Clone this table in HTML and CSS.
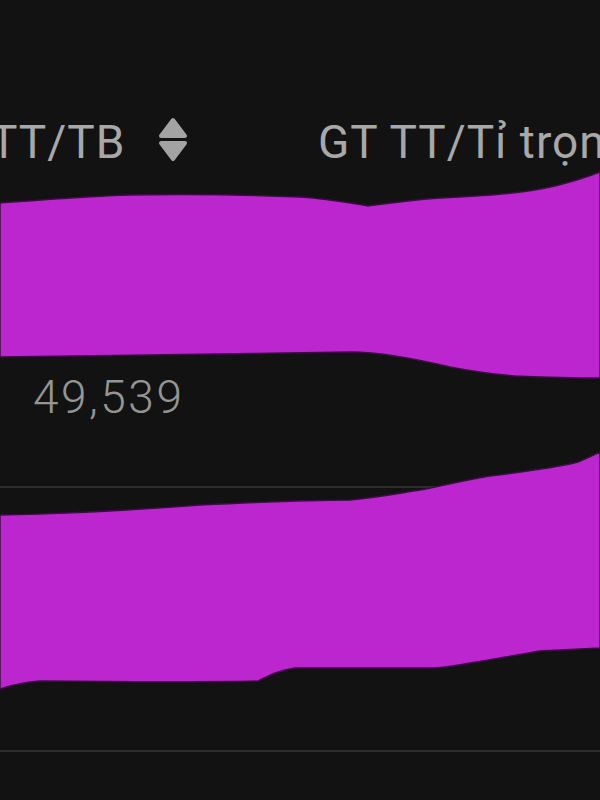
FILE: index.html
```html
<!DOCTYPE html>
<html lang="vi">

<head>
  <meta charset="UTF-8">
  <meta name="viewport" content="width=device-width, initial-scale=1.0">
  <title>Bảng giá</title>
  <link rel="stylesheet" href="styles.css">
</head>

<body>
  <div class="board">
    <div class="table">
      <div class="row head">
        <div class="cell col-1">
          <span class="title">TT/TB</span>
          <svg class="sort" width="30" height="46" viewBox="0 0 30 46">
            <path d="M15 3 L27 19 L3 19 Z" />
            <path d="M3 26 L27 26 L15 42 Z" />
          </svg>
        </div>
        <div class="cell col-2">
          <span class="title">GT TT/Tỉ trọng</span>
        </div>
      </div>
      <div class="row item">
        <div class="cell col-1">
          <span class="value">49,539</span>
        </div>
        <div class="cell col-2"></div>
      </div>
      <div class="row item"></div>
      <div class="row item last"></div>
    </div>

    <!-- vùng bị tô che -->
    <svg class="mask" width="600" height="800" viewBox="0 0 600 800">
      <path d="M0 203 C40 200 90 196 130 195 C190 194 250 195 300 197 C330 199 350 203 368 206 C390 203 410 200 440 198 C480 196 520 194 555 186 C575 181 590 176 600 172 L600 378 C570 378 540 377 515 376 C490 374 470 371 450 367 C420 360 380 352 352 352 C300 353 200 354 150 355 C90 356 40 356 0 357 Z" />
      <path d="M0 515 C60 514 120 511 200 505 C260 502 320 500 350 500 C380 497 400 493 420 490 C450 484 470 479 490 476 C530 471 560 467 578 462 C588 458 594 455 600 452 L600 648 C580 649 560 650 540 651 C510 656 490 660 470 663 C455 666 445 668 430 668 L295 668 C280 670 270 675 258 681 C240 682 120 682 40 681 C25 682 12 685 0 689 Z" />
    </svg>
  </div>
</body>

</html>
```

FILE: styles.css
```css
body {
  margin: 0;
  background-color: #121212;
  font-family: Roboto, "Noto Sans", sans-serif;
  overflow: hidden;
}

.board {
  position: relative;
  width: 600px;
  height: 800px;
  overflow: hidden;
}

.table {
  display: flex;
  flex-direction: column;
}

.row {
  display: flex;
}

.cell {
  display: flex;
  align-items: flex-start;
  white-space: nowrap;
}

.col-1 {
  width: 318px;
  flex-shrink: 0;
}

.col-2 {
  flex: 1;
}

.head {
  height: 224px;
  box-sizing: border-box;
  padding-top: 115px;
}

.head .col-1 {
  margin-left: -10px;
  width: 328px;
}

.title {
  font-size: 46px;
  line-height: 1.2;
  font-weight: 400;
  letter-spacing: 1px;
  color: #a8a8a8;
}

.sort {
  margin-left: 33px;
  margin-top: 2px;
  fill: #a3a3a3;
  stroke: #a3a3a3;
  stroke-width: 4;
  stroke-linejoin: round;
}

.item {
  height: 264px;
  box-sizing: border-box;
  border-bottom: 2px solid #2e2e2e;
}

.item .col-1 {
  padding-left: 33px;
  padding-top: 146px;
}

.item.last {
  border-bottom: none;
}

.value {
  font-size: 46px;
  line-height: 1.2;
  font-weight: 300;
  letter-spacing: 2.5px;
  color: #959595;
}

.mask {
  position: absolute;
  top: 0;
  left: 0;
  pointer-events: none;
  fill: #bc26ce;
  stroke: #3c0d44;
  stroke-width: 1.5;
}
```
